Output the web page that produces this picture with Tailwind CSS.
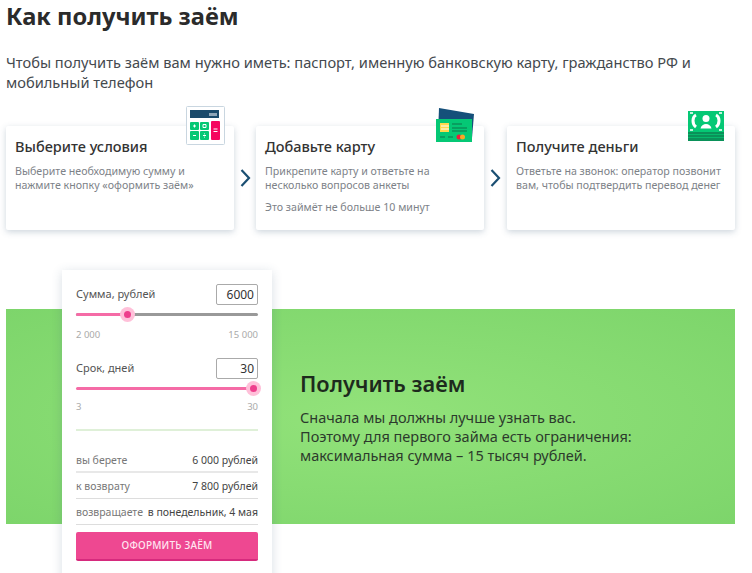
<!DOCTYPE html>
<html lang="ru">
<head>
<meta charset="utf-8">
<title>Как получить заём</title>
<script src="https://cdn.jsdelivr.net/npm/@tailwindcss/browser@4"></script>
</head>
<body class="bg-white font-['Noto_Sans','Open_Sans',sans-serif] text-[#333]">
<div class="h-[573px] w-[752px] overflow-hidden px-[6px]">
  <h1 class="-mt-[2px] text-[23.700px] leading-[36px] font-bold text-[#2b2b2b]">Как получить заём</h1>
  <p class="mt-[18px] w-[720px] text-[14.650px] leading-[20px] text-[#44494e]">Чтобы получить заём вам нужно иметь: паспорт, именную банковскую карту, гражданство РФ и мобильный телефон</p>

  <!-- steps -->
  <div class="mt-[34px] flex w-[729px] items-stretch">
    <div class="relative h-[104px] w-[228px] rounded-[2px] bg-white px-[9px] pt-[10px] shadow-[0_2px_6px_rgba(60,90,120,0.25)]">
      <h3 class="text-[14.500px] leading-[20px] font-medium text-[#333]">Выберите условия</h3>
      <p class="mt-[8px] text-[10.650px] leading-[14px] text-[#7d8288]">Выберите необходимую сумму и нажмите кнопку «оформить заём»</p>
      <svg class="absolute -top-[20px] left-[180px]" width="39" height="39" viewBox="0 0 39 39">
        <rect x="0.500" y="0.500" width="38" height="38" rx="1" fill="#fff" stroke="#c9d6e0"/>
        <rect x="4" y="4" width="29" height="8" fill="#1b4a6b"/>
        <rect x="23" y="7" width="8" height="3" fill="#8fa6b8"/>
        <rect x="4" y="16" width="9" height="8" rx="1" fill="#05c875"/>
        <rect x="14" y="16" width="9" height="8" rx="1" fill="#05c875"/>
        <rect x="4" y="25" width="9" height="9" rx="1" fill="#05c875"/>
        <rect x="14" y="25" width="9" height="9" rx="1" fill="#05c875"/>
        <rect x="25" y="15" width="9" height="19" rx="1" fill="#f5075f"/>
        <path d="M7 20h3M8.500 18.500v3M17 18.500h3v3h-3zM7 29.500h3M17 29.500h3M18.500 27.500v.8M18.500 30.700v.8M27.500 23h4M27.500 25.500h4" stroke="#fff" stroke-width="1" fill="none"/>
      </svg>
    </div>
    <div class="flex w-[22px] items-center justify-center">
      <svg width="11" height="18" viewBox="0 0 11 18"><path d="M1.500 1l7.500 8-7.500 8" fill="none" stroke="#1b4f72" stroke-width="2.200"/></svg>
    </div>
    <div class="relative h-[104px] w-[228px] rounded-[2px] bg-white px-[9px] pt-[10px] shadow-[0_2px_6px_rgba(60,90,120,0.25)]">
      <h3 class="text-[14.500px] leading-[20px] font-medium text-[#333]">Добавьте карту</h3>
      <p class="mt-[8px] text-[10.650px] leading-[14px] text-[#7d8288]">Прикрепите карту и ответьте на несколько вопросов анкеты</p>
      <p class="mt-[8px] text-[10.650px] leading-[14px] text-[#7d8288]">Это займёт не больше 10 минут</p>
      <svg class="absolute -top-[18px] left-[180px]" width="38" height="36" viewBox="0 0 38 36">
        <path d="M3 0L38 6l-2 24L2 26z" fill="#15507a"/>
        <rect x="0" y="11" width="36" height="23" fill="#05c875"/>
        <rect x="4" y="15" width="9" height="9" fill="#ffd84d"/>
        <path d="M5 18h8M5 21h8" stroke="#fff" stroke-width="1"/>
        <path d="M16 16h10M16 20h15M16 23h15M4 29h5M12 29h5" stroke="#0a9159" stroke-width="1.500"/>
        <circle cx="23" cy="29" r="2.500" fill="#ef1a3a"/>
        <circle cx="26.500" cy="29" r="2.500" fill="#f9a825"/>
      </svg>
    </div>
    <div class="flex w-[23px] items-center justify-center">
      <svg width="11" height="18" viewBox="0 0 11 18"><path d="M1.500 1l7.500 8-7.500 8" fill="none" stroke="#1b4f72" stroke-width="2.200"/></svg>
    </div>
    <div class="relative h-[104px] w-[228px] rounded-[2px] bg-white px-[9px] pt-[10px] shadow-[0_2px_6px_rgba(60,90,120,0.25)]">
      <h3 class="text-[14.500px] leading-[20px] font-medium text-[#333]">Получите деньги</h3>
      <p class="mt-[8px] text-[10.650px] leading-[14px] text-[#7d8288]">Ответьте на звонок: оператор позвонит вам, чтобы подтвердить перевод денег</p>
      <svg class="absolute -top-[15px] left-[181px]" width="36" height="30" viewBox="0 0 36 30">
        <rect width="36" height="21" fill="#05c875"/>
        <rect y="21" width="36" height="9" fill="#0a9159"/>
        <path d="M0 23.500h36M0 26.500h36" stroke="#06b86b" stroke-width="1"/>
        <circle cx="18" cy="7.500" r="3.500" fill="#fff"/>
        <path d="M12.500 17.500c1-6 10-6 11 0z" fill="#fff"/>
        <path d="M8 4C4 6 4 13 8 16M28 4c4 2 4 9 0 12" fill="none" stroke="#fff" stroke-width="3"/>
        <path d="M2 2h3M31 2h3M2 19h3M31 19h3" stroke="#fff" stroke-width="1.500"/>
      </svg>
    </div>
  </div>

  <!-- calculator + green banner -->
  <div class="mt-[79px] flex h-[215px] w-[729px] bg-[radial-gradient(ellipse_at_center,#92e27a_0%,#7dd56b_100%)] pl-[56px]">
    <div class="-mt-[39px] h-[320px] w-[210px] shrink-0 bg-white px-[14px] pt-[14px] shadow-[0_2px_10px_rgba(60,90,120,0.2)]">
      <div class="flex h-[21px] items-center justify-between">
        <span class="text-[11px] text-[#555]">Сумма, рублей</span>
        <span class="h-[21px] w-[42px] rounded-[2px] border border-[#aaa] pr-[3px] text-right text-[12px] leading-[19px] text-[#333]">6000</span>
      </div>
      <div class="relative mt-[8px] h-[3px] rounded bg-[#999]">
        <div class="h-[3px] w-[52px] rounded bg-[#f56ba6]"></div>
        <div class="absolute top-[-6px] left-[44px] flex h-[15px] w-[15px] items-center justify-center rounded-full bg-[#ffc0d9]">
          <div class="h-[7px] w-[7px] rounded-full bg-[#ee3f8d]"></div>
        </div>
      </div>
      <div class="mt-[12px] flex justify-between text-[9.500px] leading-[13px] text-[#aaa]"><span>2 000</span><span>15 000</span></div>
      <div class="mt-[17px] flex h-[21px] items-center justify-between">
        <span class="text-[11px] text-[#555]">Срок, дней</span>
        <span class="h-[21px] w-[42px] rounded-[2px] border border-[#aaa] pr-[3px] text-right text-[12px] leading-[19px] text-[#333]">30</span>
      </div>
      <div class="relative mt-[8px] h-[3px] rounded bg-[#f56ba6]">
        <div class="absolute top-[-6px] right-[-3px] flex h-[15px] w-[15px] items-center justify-center rounded-full bg-[#ffc0d9]">
          <div class="h-[7px] w-[7px] rounded-full bg-[#ee3f8d]"></div>
        </div>
      </div>
      <div class="mt-[10px] flex justify-between text-[9.500px] leading-[13px] text-[#aaa]"><span>3</span><span>30</span></div>
      <div class="mt-[16px] h-[2px] bg-[#dff0d8]"></div>
      <div class="mt-[19px] flex h-[23px] items-center justify-between border-b-2 border-[#e8e8e8] text-[10.500px]">
        <span class="text-[#777]">вы берете</span><span class="text-[#444]">6 000 рублей</span>
      </div>
      <div class="flex h-[26px] items-center justify-between border-b border-[#ddd] pt-[3px] text-[10.500px]">
        <span class="text-[#777]">к возврату</span><span class="text-[#444]">7 800 рублей</span>
      </div>
      <div class="flex h-[26px] items-center justify-between border-b border-[#ddd] pt-[3px] text-[10.500px]">
        <span class="text-[#777]">возвращаете</span><span class="text-[#444]">в понедельник, 4 мая</span>
      </div>
      <button class="mt-[7px] h-[29px] w-full rounded-[2px] border-b-2 border-[#d62a7d] bg-[#ee4891] text-[10px] font-medium tracking-[0.2px] text-[#ffe6f1]">ОФОРМИТЬ ЗАЁМ</button>
    </div>
    <div class="pt-[60px] pl-[28px]">
      <h2 class="text-[21.800px] leading-[30px] font-semibold text-[#1d2a1d]">Получить заём</h2>
      <p class="mt-[9px] text-[14.500px] leading-[19px] text-[#2c3a2c]">Сначала мы должны лучше узнать вас.<br>Поэтому для первого займа есть ограничения:<br>максимальная сумма – 15 тысяч рублей.</p>
    </div>
  </div>
</div>
</body>
</html>
